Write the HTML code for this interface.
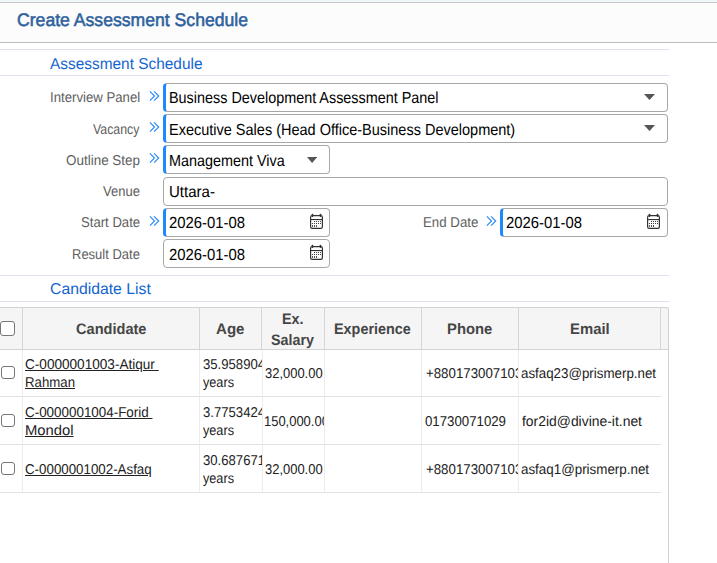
<!DOCTYPE html>
<html><head><meta charset="utf-8">
<style>
*{margin:0;padding:0;box-sizing:border-box}
html,body{width:717px;height:563px;overflow:hidden;background:#fff;font-family:"Liberation Sans",sans-serif;text-rendering:geometricPrecision}
.a{position:absolute}
.t{position:absolute;white-space:nowrap;line-height:1;transform-origin:0 0}
.box{position:absolute;border:1px solid #a8a8a8;border-radius:4px;background:#fff}
.req{border-left:3px solid #1e88ff}
.hl{position:absolute;height:1px;background:#e0e0f0;left:0;width:669px}
.vl{position:absolute;width:1px}
.cb{position:absolute;width:13px;height:13px;border:1px solid #777;border-radius:3px;background:#fff}
u{text-decoration:underline}
</style></head><body>
<div class="a" style="left:0;top:0;width:717px;height:2px;background:#eef8f8"></div>
<div class="a" style="left:0;top:2px;width:717px;height:1px;background:#c9c9c9"></div>
<div class="a" style="left:0;top:4px;width:717px;height:38px;background:#fcfcfc"></div>
<div class="a" style="left:0;top:42px;width:717px;height:1px;background:#bdbdbd"></div>
<div class="t" style="left:16.52px;top:11.00px;font-size:18.3px;color:#2e619c;transform:scaleX(0.9633);-webkit-text-stroke:0.55px #2e619c">Create Assessment Schedule</div>
<div class="hl" style="top:49px"></div><div class="hl" style="top:75px"></div>
<div class="t" style="left:50.17px;top:57.00px;font-size:15.8px;color:#1565d0;transform:scaleX(0.9756);">Assessment Schedule</div>
<div class="t" style="left:50.19px;top:91.00px;font-size:14.2px;color:#5e5e5e;transform:scaleX(0.9300);">Interview Panel</div>
<div class="t" style="left:93.15px;top:123.00px;font-size:14.2px;color:#5e5e5e;transform:scaleX(0.8702);">Vacancy</div>
<div class="t" style="left:66.07px;top:154.00px;font-size:14.2px;color:#5e5e5e;transform:scaleX(0.9481);">Outline Step</div>
<div class="t" style="left:103.25px;top:185.00px;font-size:14.2px;color:#5e5e5e;transform:scaleX(0.9169);">Venue</div>
<div class="t" style="left:81.01px;top:216.00px;font-size:14.2px;color:#5e5e5e;transform:scaleX(0.9256);">Start Date</div>
<div class="t" style="left:72.23px;top:248.00px;font-size:14.2px;color:#5e5e5e;transform:scaleX(0.9159);">Result Date</div>
<div class="t" style="left:422.61px;top:216.00px;font-size:14.2px;color:#5e5e5e;transform:scaleX(0.9371);">End Date</div>
<svg class="a" style="left:148px;top:89.3px" width="13" height="14" viewBox="0 0 13 14"><path d="M1.9 2.3 L6.5 7.0 L1.9 11.7 M6.1 2.3 L10.7 7.0 L6.1 11.7" fill="none" stroke="#2f8bf8" stroke-width="1.2"/></svg>
<svg class="a" style="left:148px;top:120.3px" width="13" height="14" viewBox="0 0 13 14"><path d="M1.9 2.3 L6.5 7.0 L1.9 11.7 M6.1 2.3 L10.7 7.0 L6.1 11.7" fill="none" stroke="#2f8bf8" stroke-width="1.2"/></svg>
<svg class="a" style="left:148px;top:151.3px" width="13" height="14" viewBox="0 0 13 14"><path d="M1.9 2.3 L6.5 7.0 L1.9 11.7 M6.1 2.3 L10.7 7.0 L6.1 11.7" fill="none" stroke="#2f8bf8" stroke-width="1.2"/></svg>
<svg class="a" style="left:148px;top:214.3px" width="13" height="14" viewBox="0 0 13 14"><path d="M1.9 2.3 L6.5 7.0 L1.9 11.7 M6.1 2.3 L10.7 7.0 L6.1 11.7" fill="none" stroke="#2f8bf8" stroke-width="1.2"/></svg>
<svg class="a" style="left:485px;top:214.3px" width="13" height="14" viewBox="0 0 13 14"><path d="M1.9 2.3 L6.5 7.0 L1.9 11.7 M6.1 2.3 L10.7 7.0 L6.1 11.7" fill="none" stroke="#2f8bf8" stroke-width="1.2"/></svg>
<div class="box req" style="left:163px;top:83px;width:505px;height:29px"></div>
<div class="box req" style="left:163px;top:114px;width:505px;height:29px"></div>
<div class="box req" style="left:163px;top:145px;width:167px;height:29px"></div>
<div class="box" style="left:163px;top:177px;width:505px;height:29px"></div>
<div class="box req" style="left:163px;top:208px;width:167px;height:29px"></div>
<div class="box" style="left:163px;top:239px;width:167px;height:29px"></div>
<div class="box req" style="left:500px;top:208px;width:168px;height:29px"></div>
<div class="t" style="left:168.62px;top:91.00px;font-size:16px;color:#000;transform:scaleX(0.8993);">Business Development Assessment Panel</div>
<div class="t" style="left:168.61px;top:123.00px;font-size:16px;color:#000;transform:scaleX(0.9060);">Executive Sales (Head Office-Business Development)</div>
<div class="t" style="left:169.12px;top:154.00px;font-size:16px;color:#000;transform:scaleX(0.8989);">Management Viva</div>
<div class="t" style="left:168.74px;top:185.00px;font-size:16px;color:#000;transform:scaleX(0.9391);">Uttara-</div>
<div class="t" style="left:168.76px;top:216.00px;font-size:16px;color:#000;transform:scaleX(0.9284);">2026-01-08</div>
<div class="t" style="left:168.76px;top:248.00px;font-size:16px;color:#000;transform:scaleX(0.9284);">2026-01-08</div>
<div class="t" style="left:506.06px;top:216.00px;font-size:16px;color:#000;transform:scaleX(0.9284);">2026-01-08</div>
<svg class="a" style="left:644px;top:94px" width="11" height="6"><path d="M0 0H11L5.5 6Z" fill="#555"/></svg>
<svg class="a" style="left:644px;top:125px" width="11" height="6"><path d="M0 0H11L5.5 6Z" fill="#555"/></svg>
<svg class="a" style="left:307px;top:157px" width="10.2" height="6"><path d="M0 0H10.2L5.1 6Z" fill="#555"/></svg>
<svg class="a" style="left:306px;top:210px" width="20" height="22" viewBox="0 0 20 22"><rect x="4.6" y="5.6" width="11.8" height="12.8" rx="1.6" fill="none" stroke="#333" stroke-width="1.2"/><rect x="4" y="9" width="13" height="1.1" fill="#333"/><rect x="5.8" y="3.7" width="1.4" height="3.2" rx="0.6" fill="#333"/><rect x="13.8" y="3.7" width="1.4" height="3.2" rx="0.6" fill="#333"/><rect x="8" y="11" width="1" height="1" fill="#444"/><rect x="10" y="11" width="1" height="1" fill="#444"/><rect x="12" y="11" width="1" height="1" fill="#444"/><rect x="14" y="11" width="1" height="1" fill="#444"/><rect x="6" y="13" width="1" height="1" fill="#444"/><rect x="8" y="13" width="1" height="1" fill="#444"/><rect x="10" y="13" width="1" height="1" fill="#444"/><rect x="12" y="13" width="1" height="1" fill="#444"/><rect x="14" y="13" width="1" height="1" fill="#444"/><rect x="6" y="15" width="1" height="2" fill="#555"/><rect x="8" y="15" width="1" height="2" fill="#555"/><rect x="10" y="15" width="1" height="2" fill="#555"/></svg>
<svg class="a" style="left:306px;top:241px" width="20" height="22" viewBox="0 0 20 22"><rect x="4.6" y="5.6" width="11.8" height="12.8" rx="1.6" fill="none" stroke="#333" stroke-width="1.2"/><rect x="4" y="9" width="13" height="1.1" fill="#333"/><rect x="5.8" y="3.7" width="1.4" height="3.2" rx="0.6" fill="#333"/><rect x="13.8" y="3.7" width="1.4" height="3.2" rx="0.6" fill="#333"/><rect x="8" y="11" width="1" height="1" fill="#444"/><rect x="10" y="11" width="1" height="1" fill="#444"/><rect x="12" y="11" width="1" height="1" fill="#444"/><rect x="14" y="11" width="1" height="1" fill="#444"/><rect x="6" y="13" width="1" height="1" fill="#444"/><rect x="8" y="13" width="1" height="1" fill="#444"/><rect x="10" y="13" width="1" height="1" fill="#444"/><rect x="12" y="13" width="1" height="1" fill="#444"/><rect x="14" y="13" width="1" height="1" fill="#444"/><rect x="6" y="15" width="1" height="2" fill="#555"/><rect x="8" y="15" width="1" height="2" fill="#555"/><rect x="10" y="15" width="1" height="2" fill="#555"/></svg>
<svg class="a" style="left:643px;top:210px" width="20" height="22" viewBox="0 0 20 22"><rect x="4.6" y="5.6" width="11.8" height="12.8" rx="1.6" fill="none" stroke="#333" stroke-width="1.2"/><rect x="4" y="9" width="13" height="1.1" fill="#333"/><rect x="5.8" y="3.7" width="1.4" height="3.2" rx="0.6" fill="#333"/><rect x="13.8" y="3.7" width="1.4" height="3.2" rx="0.6" fill="#333"/><rect x="8" y="11" width="1" height="1" fill="#444"/><rect x="10" y="11" width="1" height="1" fill="#444"/><rect x="12" y="11" width="1" height="1" fill="#444"/><rect x="14" y="11" width="1" height="1" fill="#444"/><rect x="6" y="13" width="1" height="1" fill="#444"/><rect x="8" y="13" width="1" height="1" fill="#444"/><rect x="10" y="13" width="1" height="1" fill="#444"/><rect x="12" y="13" width="1" height="1" fill="#444"/><rect x="14" y="13" width="1" height="1" fill="#444"/><rect x="6" y="15" width="1" height="2" fill="#555"/><rect x="8" y="15" width="1" height="2" fill="#555"/><rect x="10" y="15" width="1" height="2" fill="#555"/></svg>
<div class="hl" style="top:275px"></div><div class="hl" style="top:301px"></div>
<div class="t" style="left:50.11px;top:282.00px;font-size:15.8px;color:#1565d0;transform:scaleX(0.9979);">Candidate List</div>
<div class="a" style="left:0;top:307px;width:668px;height:42px;background:#f5f5f5"></div>
<div class="a" style="left:-5px;top:307px;width:674px;height:300px;border:1px solid #d2d2d2;border-bottom:0;border-radius:0 3px 0 0"></div>
<div class="a" style="left:0;top:349px;width:669px;height:1px;background:#d2d2d2"></div>
<div class="vl" style="left:22px;top:308px;height:41px;background:#d6d6d6"></div>
<div class="vl" style="left:199px;top:308px;height:41px;background:#d6d6d6"></div>
<div class="vl" style="left:261px;top:308px;height:41px;background:#d6d6d6"></div>
<div class="vl" style="left:324px;top:308px;height:41px;background:#d6d6d6"></div>
<div class="vl" style="left:421px;top:308px;height:41px;background:#d6d6d6"></div>
<div class="vl" style="left:518px;top:308px;height:41px;background:#d6d6d6"></div>
<div class="vl" style="left:660px;top:308px;height:41px;background:#d6d6d6"></div>
<div class="vl" style="left:22px;top:350px;height:142px;background:#ececec"></div>
<div class="vl" style="left:199px;top:350px;height:142px;background:#ececec"></div>
<div class="vl" style="left:262px;top:350px;height:142px;background:#ececec"></div>
<div class="vl" style="left:324px;top:350px;height:142px;background:#ececec"></div>
<div class="vl" style="left:421px;top:350px;height:142px;background:#ececec"></div>
<div class="vl" style="left:518px;top:350px;height:142px;background:#ececec"></div>
<div class="a" style="left:0;top:396px;width:661px;height:1px;background:#e2e2e2"></div>
<div class="a" style="left:0;top:444px;width:661px;height:1px;background:#e2e2e2"></div>
<div class="a" style="left:0;top:492px;width:661px;height:1px;background:#e2e2e2"></div>
<div class="cb" style="left:-0.5px;top:321px;width:15px;height:14.7px"></div>
<div class="t" style="left:75.90px;top:322.00px;font-size:15.2px;color:#454545;font-weight:bold;transform:scaleX(0.9594);">Candidate</div>
<div class="t" style="left:216.34px;top:322.00px;font-size:15.2px;color:#454545;font-weight:bold;transform:scaleX(0.9917);">Age</div>
<div class="t" style="left:282.45px;top:312.00px;font-size:15.2px;color:#454545;font-weight:bold;transform:scaleX(0.9440);">Ex.</div>
<div class="t" style="left:271.30px;top:333.00px;font-size:15.2px;color:#454545;font-weight:bold;transform:scaleX(0.9417);">Salary</div>
<div class="t" style="left:334.45px;top:322.00px;font-size:15.2px;color:#454545;font-weight:bold;transform:scaleX(0.9474);">Experience</div>
<div class="t" style="left:446.92px;top:322.00px;font-size:15.2px;color:#454545;font-weight:bold;transform:scaleX(0.9770);">Phone</div>
<div class="t" style="left:569.62px;top:322.00px;font-size:15.2px;color:#454545;font-weight:bold;transform:scaleX(0.9796);">Email</div>
<div class="cb" style="left:1px;top:366px;width:13.5px;height:13.4px"></div>
<div class="t" style="left:25.02px;top:358.00px;font-size:14.2px;color:#222;transform:scaleX(0.9574);"><u>C-0000001003-Atiqur&nbsp;</u></div>
<div class="t" style="left:24.71px;top:376.00px;font-size:14.2px;color:#222;transform:scaleX(0.9321);"><u>Rahman</u></div>
<div class="a" style="left:200.30px;top:356.00px;width:61.70px;height:18.46px;overflow:hidden"><div class="t" style="left:2.50px;top:2px;font-size:14.2px;color:#222;transform:scaleX(0.9250);">35.958904</div></div>
<div class="t" style="left:202.57px;top:376.00px;font-size:14.2px;color:#222;transform:scaleX(0.8924);">years</div>
<div class="a" style="left:262.30px;top:365.00px;width:61.70px;height:18.46px;overflow:hidden"><div class="t" style="left:2.51px;top:2px;font-size:14.2px;color:#222;transform:scaleX(0.9131);">32,000.00</div></div>
<div class="a" style="left:423.30px;top:365.00px;width:94.70px;height:18.46px;overflow:hidden"><div class="t" style="left:2.36px;top:2px;font-size:14.2px;color:#222;transform:scaleX(0.9350);">+8801730071032</div></div>
<div class="t" style="left:521.24px;top:367.00px;font-size:14.2px;color:#222;transform:scaleX(0.9394);">asfaq23@prismerp.net</div>
<div class="cb" style="left:1px;top:414px;width:13.5px;height:13.4px"></div>
<div class="t" style="left:25.03px;top:406.00px;font-size:14.2px;color:#222;transform:scaleX(0.9450);"><u>C-0000001004-Forid&nbsp;</u></div>
<div class="t" style="left:24.59px;top:424.00px;font-size:14.2px;color:#222;transform:scaleX(1.0433);"><u>Mondol</u></div>
<div class="a" style="left:200.30px;top:404.00px;width:61.70px;height:18.46px;overflow:hidden"><div class="t" style="left:2.50px;top:2px;font-size:14.2px;color:#222;transform:scaleX(0.9250);">3.7753424</div></div>
<div class="t" style="left:202.57px;top:424.00px;font-size:14.2px;color:#222;transform:scaleX(0.8924);">years</div>
<div class="a" style="left:262.30px;top:413.00px;width:61.70px;height:18.46px;overflow:hidden"><div class="t" style="left:2.01px;top:2px;font-size:14.2px;color:#222;transform:scaleX(0.9130);">150,000.00</div></div>
<div class="t" style="left:424.98px;top:415.00px;font-size:14.2px;color:#222;transform:scaleX(0.9328);">01730071029</div>
<div class="t" style="left:521.61px;top:415.00px;font-size:14.2px;color:#222;transform:scaleX(0.9799);">for2id@divine-it.net</div>
<div class="cb" style="left:1px;top:462px;width:13.5px;height:13.4px"></div>
<div class="t" style="left:25.03px;top:463.00px;font-size:14.2px;color:#222;transform:scaleX(0.9393);"><u>C-0000001002-Asfaq</u></div>
<div class="a" style="left:200.30px;top:452.00px;width:61.70px;height:18.46px;overflow:hidden"><div class="t" style="left:2.50px;top:2px;font-size:14.2px;color:#222;transform:scaleX(0.9250);">30.687671</div></div>
<div class="t" style="left:202.57px;top:472.00px;font-size:14.2px;color:#222;transform:scaleX(0.8924);">years</div>
<div class="a" style="left:262.30px;top:461.00px;width:61.70px;height:18.46px;overflow:hidden"><div class="t" style="left:2.51px;top:2px;font-size:14.2px;color:#222;transform:scaleX(0.9131);">32,000.00</div></div>
<div class="a" style="left:423.30px;top:461.00px;width:94.70px;height:18.46px;overflow:hidden"><div class="t" style="left:2.36px;top:2px;font-size:14.2px;color:#222;transform:scaleX(0.9350);">+8801730071032</div></div>
<div class="t" style="left:521.24px;top:463.00px;font-size:14.2px;color:#222;transform:scaleX(0.9426);">asfaq1@prismerp.net</div>
</body></html>
